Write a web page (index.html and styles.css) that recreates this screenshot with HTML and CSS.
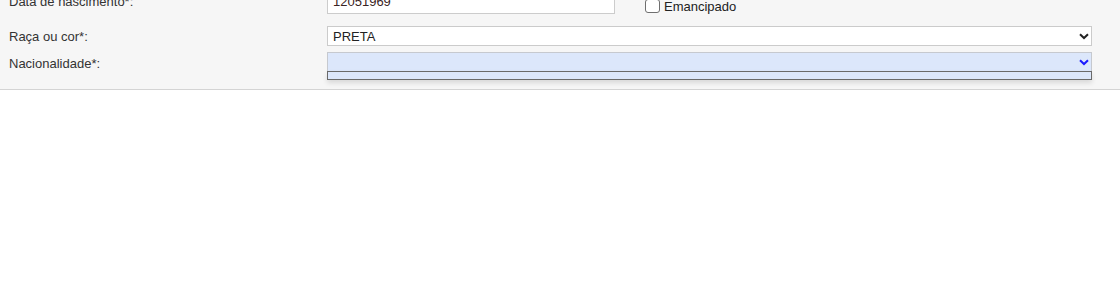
FILE: index.html
```html
<!DOCTYPE html>
<html lang="pt-BR">
<head>
<meta charset="utf-8">
<title>Cadastro</title>
<link rel="stylesheet" href="styles.css">
</head>
<body>
<div class="panel">
  <div class="row row-date">
    <label class="label" for="nasc">Data de nascimento*:</label>
    <input class="text-input" id="nasc" type="text" value="12051969">
    <label class="check">
      <input class="checkbox" type="checkbox">
      <span>Emancipado</span>
    </label>
  </div>
  <div class="row row-raca">
    <label class="label" for="raca">Raça ou cor*:</label>
    <div class="select-wrap">
      <select class="select" id="raca">
        <option>PRETA</option>
      </select>
      <svg class="chev" width="10" height="7" viewBox="0 0 10 7"><path d="M1 1.2 L5 5 L9 1.2" fill="none" stroke="#222" stroke-width="2"/></svg>
    </div>
  </div>
  <div class="row row-nac">
    <label class="label" for="nac">Nacionalidade*:</label>
    <div class="select-wrap">
      <select class="select select-active" id="nac">
        <option></option>
      </select>
      <svg class="chev" width="10" height="7" viewBox="0 0 10 7"><path d="M1 1.2 L5 5 L9 1.2" fill="none" stroke="#1a1aff" stroke-width="2"/></svg>
      <div class="dropdown"></div>
    </div>
  </div>
</div>
</body>
</html>
```
FILE: styles.css
```css
html, body {
  margin: 0;
  padding: 0;
  background: #ffffff;
}
body {
  font-family: "Liberation Sans", Arial, sans-serif;
  font-size: 13px;
  color: #333333;
}
.panel {
  margin-top: -12px;
  padding: 0 0 17px 9px;
  background: #f6f6f6;
  border-bottom: 1px solid #d4d4d4;
}
.row {
  display: flex;
  align-items: center;
}
.row-raca {
  margin-top: 12px;
}
.row-nac {
  margin-top: 6px;
}
.label {
  width: 318px;
  flex: none;
  color: #333333;
}
.row-nac .label {
  margin-top: 2px;
}
.text-input {
  box-sizing: border-box;
  width: 288px;
  height: 26px;
  margin: 0;
  padding: 0 5px;
  border: 1px solid #cccccc;
  background: #ffffff;
  font-family: inherit;
  font-size: 13px;
  color: #3a2424;
  outline: none;
}
.check {
  display: flex;
  align-items: center;
  margin-left: 30px;
  margin-top: 10px;
  color: #222222;
}
.checkbox {
  appearance: none;
  -webkit-appearance: none;
  box-sizing: border-box;
  width: 15px;
  height: 14px;
  margin: 0 4px 0 0;
  border: 1px solid #6f6f6f;
  border-radius: 3px;
  background: #ffffff;
}
.select-wrap {
  position: relative;
  width: 765px;
}
.select {
  appearance: none;
  -webkit-appearance: none;
  box-sizing: border-box;
  display: block;
  width: 100%;
  height: 20px;
  margin: 0;
  padding: 0 20px 0 5px;
  border: 1px solid #cbcbcb;
  border-radius: 0;
  background: #ffffff;
  font-family: inherit;
  font-size: 13px;
  color: #222222;
  outline: none;
}
.select-active {
  background: #dce7fb;
  border-color: #c6c9cf;
}
.chev {
  position: absolute;
  right: 3px;
  top: 7px;
}
.dropdown {
  position: absolute;
  left: 0;
  right: 0;
  top: 19px;
  height: 7px;
  border: 1px solid #6a6a6a;
  background: #dce7fb;
  box-shadow: 0 3px 5px rgba(0, 0, 0, 0.12);
}
```
